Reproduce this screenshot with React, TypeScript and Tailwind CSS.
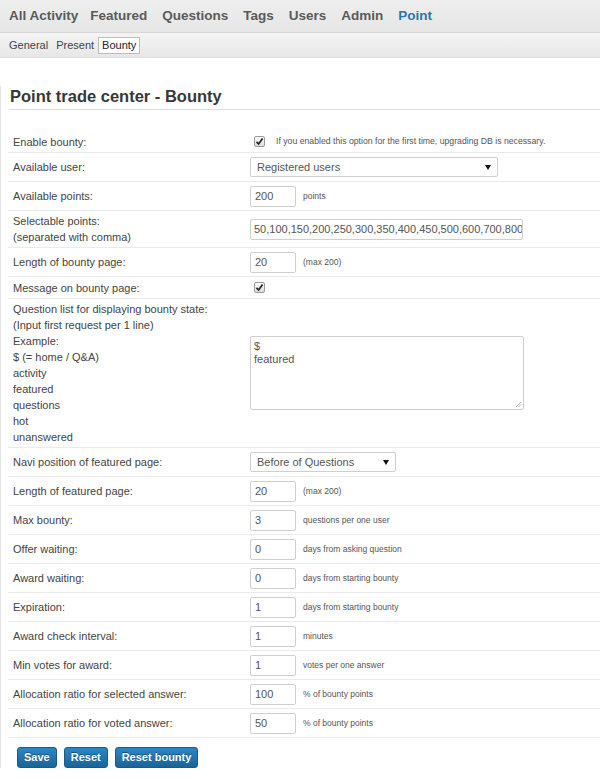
import type { ReactNode } from "react";

const navItems = ["All Activity", "Featured", "Questions", "Tags", "Users", "Admin", "Point"];

function Check() {
  return (
    <span className="ml-[4px] flex h-[11px] w-[11px] items-center justify-center rounded-[2px] border border-[#9a9a9a] bg-gradient-to-b from-[#fdfdfd] to-[#dcdcdc]">
      <svg width="9" height="9" viewBox="0 0 9 9">
        <path d="M1.5 4.8 L3.6 7 L7.6 1.6" fill="none" stroke="#222" strokeWidth="1.7" />
      </svg>
    </span>
  );
}

function Input({ value, note }: { value: string; note?: string }) {
  return (
    <>
      <span className="flex h-[21px] w-[46px] items-center rounded-[2px] border border-[#cfcfcf] bg-white pl-[4px] text-[11px] text-[#555]">
        {value}
      </span>
      {note && <span className="ml-[7px] text-[8.5px] text-[#555]">{note}</span>}
    </>
  );
}

function Select({ value, width }: { value: string; width: string }) {
  return (
    <span
      className={`flex h-[20px] items-center justify-between rounded-[2px] border border-[#cfcfcf] bg-white pl-[6px] pr-[6px] text-[11px] text-[#555] ${width}`}
    >
      <span>{value}</span>
      <svg width="6" height="6" viewBox="0 0 6 6">
        <path d="M0 1 L6 1 L3 6 Z" fill="#111" />
      </svg>
    </span>
  );
}

function Row({
  label,
  children,
  tall,
  short,
}: {
  label: ReactNode;
  children?: ReactNode;
  tall?: boolean;
  short?: boolean;
}) {
  return (
    <div className="flex border-b border-[#ebebeb] py-[2px]">
      <div className={`w-[242px] shrink-0 pl-[5px] text-[11px] leading-[16px] text-[#444] ${tall ? "" : "flex items-center"}`}>
        {label}
      </div>
      <div className={`flex flex-1 items-center ${short ? "min-h-[17px]" : "min-h-[24px]"}`}>{children}</div>
    </div>
  );
}

export default function App() {
  return (
    <div className="relative h-[778px] w-[600px] overflow-hidden bg-white font-['Liberation_Sans',Arial,sans-serif]">
      <div className="flex h-[33px] items-center gap-[15px] border-b border-[#d6d6d6] bg-gradient-to-b from-[#eeeeee] to-[#e6e6e6] pl-[9px] text-[13.5px] font-bold">
        {navItems.map((n) => (
          <span
            key={n}
            className={`${n === "Point" ? "text-[#2b77a8]" : "text-[#5a5a5a]"} ${n === "All Activity" ? "mr-[-3px]" : ""}`}
          >
            {n}
          </span>
        ))}
      </div>
      <div className="flex h-[25px] items-center border-b border-[#dedede] bg-gradient-to-b from-[#f4f4f4] to-[#e7e7e7] pl-[5px] text-[11px] text-[#444]">
        <span className="border border-transparent px-[3px]">General</span>
        <span className="border border-transparent px-[3px]">Present</span>
        <span className="flex h-[17px] items-center border border-[#bdbdbd] bg-white px-[3px] text-[#222]">Bounty</span>
      </div>

      <div className="border-l border-[#e4e4e4]">
        <h1 className="ml-[8px] mt-[28px] border-b border-[#dcdcdc] pb-[3px] pl-[1px] text-[16.5px] font-bold leading-[20px] text-[#383838]">
          Point trade center - Bounty
        </h1>

        <div className="ml-[7px] mt-[21px]">
          <Row short label="Enable bounty:">
            <Check />
            <span className="ml-[11px] text-[8.7px] text-[#555]">
              If you enabled this option for the first time, upgrading DB is necessary.
            </span>
          </Row>
          <Row label="Available user:">
            <Select value="Registered users" width="w-[248px]" />
          </Row>
          <Row label="Available points:">
            <Input value="200" note="points" />
          </Row>
          <Row
            label={
              <div>
                <div>Selectable points:</div>
                <div>(separated with comma)</div>
              </div>
            }
          >
            <span className="flex h-[21px] w-[273px] items-center overflow-hidden whitespace-nowrap rounded-[2px] border border-[#cfcfcf] bg-white pl-[3px] text-[11px] text-[#555]">
              50,100,150,200,250,300,350,400,450,500,600,700,800,900
            </span>
          </Row>
          <Row label="Length of bounty page:">
            <Input value="20" note="(max 200)" />
          </Row>
          <Row short label="Message on bounty page:">
            <Check />
          </Row>
          <Row
            tall
            label={
              <div>
                <div>Question list for displaying bounty state:</div>
                <div>(Input first request per 1 line)</div>
                <div>Example:</div>
                <div>$ (= home / Q&amp;A)</div>
                <div>activity</div>
                <div>featured</div>
                <div>questions</div>
                <div>hot</div>
                <div>unanswered</div>
              </div>
            }
          >
            <div className="relative h-[74px] w-[274px] rounded-[2px] border border-[#cfcfcf] bg-white px-[3px] pt-[3px] text-[11px] leading-[13px] text-[#555]">
              <div>$</div>
              <div>featured</div>
              <svg className="absolute bottom-[1px] right-[1px]" width="7" height="7" viewBox="0 0 7 7">
                <path d="M1 6 L6 1 M3.5 6 L6 3.5" stroke="#999" strokeWidth="0.8" />
              </svg>
            </div>
          </Row>
          <Row label="Navi position of featured page:">
            <Select value="Before of Questions" width="w-[146px]" />
          </Row>
          <Row label="Length of featured page:">
            <Input value="20" note="(max 200)" />
          </Row>
          <Row label="Max bounty:">
            <Input value="3" note="questions per one user" />
          </Row>
          <Row label="Offer waiting:">
            <Input value="0" note="days from asking question" />
          </Row>
          <Row label="Award waiting:">
            <Input value="0" note="days from starting bounty" />
          </Row>
          <Row label="Expiration:">
            <Input value="1" note="days from starting bounty" />
          </Row>
          <Row label="Award check interval:">
            <Input value="1" note="minutes" />
          </Row>
          <Row label="Min votes for award:">
            <Input value="1" note="votes per one answer" />
          </Row>
          <Row label="Allocation ratio for selected answer:">
            <Input value="100" note="% of bounty points" />
          </Row>
          <Row label="Allocation ratio for voted answer:">
            <Input value="50" note="% of bounty points" />
          </Row>
        </div>

        <div className="ml-[16px] mt-[9px] flex gap-[7px]">
          {["Save", "Reset", "Reset bounty"].map((b) => (
            <button
              key={b}
              className="h-[21px] rounded-[3px] border border-[#1b5a86] bg-gradient-to-b from-[#2d86c1] to-[#1a6498] px-[6px] text-[11px] font-bold text-white [text-shadow:0_-1px_0_rgba(0,0,0,0.35)]"
            >
              {b}
            </button>
          ))}
        </div>
      </div>
    </div>
  );
}
